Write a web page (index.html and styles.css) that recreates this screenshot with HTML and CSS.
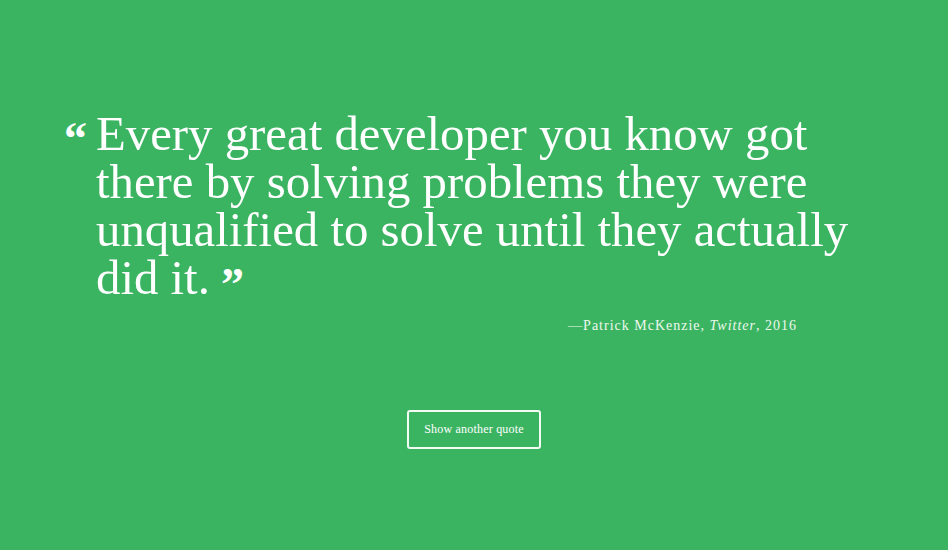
FILE: index.html
```html
<!DOCTYPE html>
<html lang="en">
<head>
<meta charset="utf-8">
<title>Quote</title>
<link rel="stylesheet" href="styles.css">
</head>
<body>
<main class="page">
  <figure class="quote">
    <blockquote class="quote-body">
      <span class="mark mark-open">&ldquo;</span>
      <p class="quote-text">Every great developer you know got there by solving problems they were unqualified to solve until they actually did it.<span class="mark mark-close">&rdquo;</span></p>
    </blockquote>
    <figcaption class="cite">&mdash;Patrick McKenzie, <em>Twitter</em>, 2016</figcaption>
  </figure>
  <button class="btn" type="button">Show another quote</button>
</main>
</body>
</html>
```

FILE: styles.css
```css
html, body {
  margin: 0;
  padding: 0;
}
body {
  background: #3bb462;
  color: #ffffff;
  font-family: "Liberation Serif", "Times New Roman", serif;
}
.page {
  height: 550px;
  display: flex;
  flex-direction: column;
  align-items: center;
  padding-top: 110px;
  box-sizing: border-box;
}
.quote {
  width: 820px;
  margin: 0;
}
.quote-body {
  display: flex;
  margin: 0;
}
.mark {
  font-weight: bold;
  line-height: 1;
}
.mark-open {
  width: 32px;
  flex: none;
  font-size: 46px;
  padding-top: 6px;
}
.mark-close {
  font-size: 46px;
  margin-left: 11px;
  vertical-align: -6px;
  line-height: 0;
}
.quote-text {
  margin: 0;
  font-size: 48.8px;
  line-height: 48px;
  width: 780px;
}
.cite {
  margin-top: 16px;
  text-align: right;
  padding-right: 87px;
  font-size: 14px;
  letter-spacing: 1px;
  color: #eef8ee;
}
.btn {
  margin-top: 76px;
  background: transparent;
  border: 2px solid #f4fbf4;
  border-radius: 3px;
  color: #ffffff;
  font-family: "Liberation Serif", "Times New Roman", serif;
  font-size: 12px;
  letter-spacing: 0.2px;
  width: 134px;
  height: 39px;
  padding: 0;
}
```
